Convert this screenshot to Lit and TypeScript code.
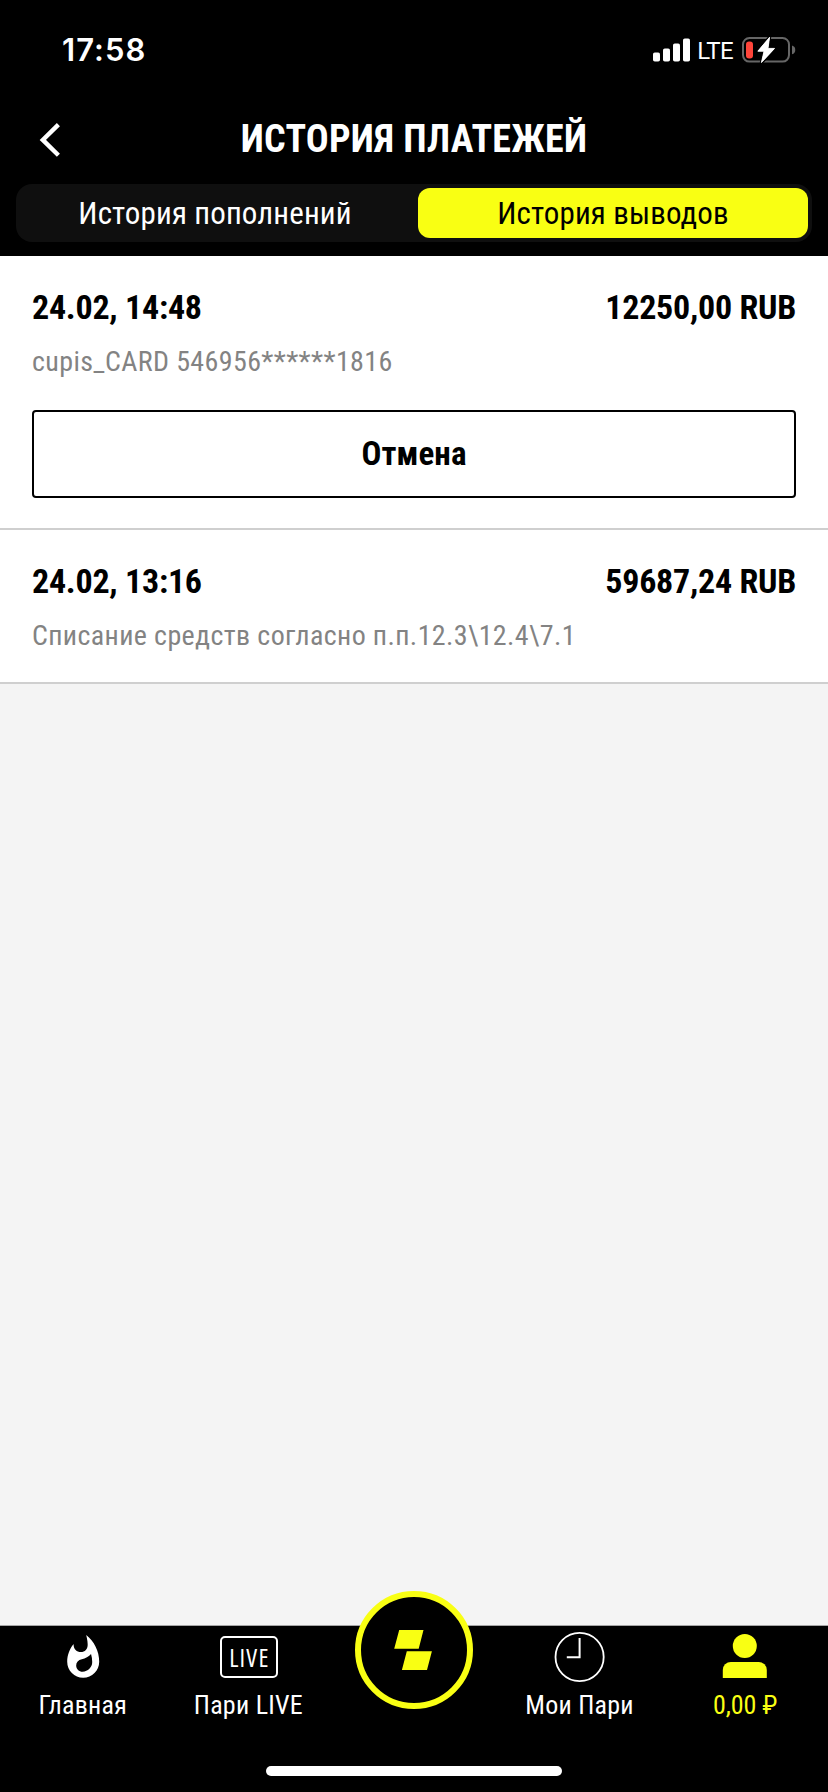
import { LitElement, html, css, svg, nothing } from "lit";
import { customElement, property, state } from "lit/decorators.js";
import { classMap } from "lit/directives/class-map.js";

interface Payment {
  date: string;
  amount: string;
  details: string;
  cancellable?: boolean;
}

const payments: Payment[] = [
  { date: "24.02, 14:48", amount: "12250,00 RUB", details: "cupis_CARD 546956******1816", cancellable: true },
  { date: "24.02, 13:16", amount: "59687,24 RUB", details: "Списание средств согласно п.п.12.3\\12.4\\7.1" },
];

@customElement("status-bar")
export class StatusBar extends LitElement {
  static styles = css`
    :host {
      display: flex;
      justify-content: space-between;
      align-items: flex-start;
      height: 68px;
      padding: 30px 32px 0 62px;
      color: #fff;
    }
    .time {
      font: 600 31px/40px Inter, sans-serif;
      letter-spacing: 1.05px;
    }
    .indicators {
      display: flex;
      align-items: center;
      height: 40px;
    }
    .signal {
      width: 38px;
      height: 24px;
    }
    .network {
      font: 400 24px/40px Roboto, sans-serif;
      letter-spacing: -0.6px;
      margin: 1px 9px 0 6px;
    }
    .battery {
      width: 54px;
      height: 28px;
    }
  `;
  render() {
    return html`
      <div class="time">17:58</div>
      <div class="indicators">
        <svg class="signal" viewBox="0 0 38 24" fill="#fff">
          <rect x="0" y="14.5" width="7" height="9" rx="1.8" />
          <rect x="10" y="10.5" width="7" height="13" rx="1.8" />
          <rect x="20" y="5.5" width="7" height="18" rx="1.8" />
          <rect x="30" y="0.5" width="7" height="23" rx="1.8" />
        </svg>
        <span class="network">LTE</span>
        <svg class="battery" viewBox="0 0 54 28">
          <rect x="1" y="2" width="46" height="23.6" rx="6.5" fill="none" stroke="#666" stroke-width="2" />
          <path d="M50 9.5a4.6 4.6 0 0 1 0 8.8z" fill="#666" />
          <rect x="4" y="5.5" width="7" height="17" rx="3" fill="#ff453a" />
          <path
            d="M27.6 1.2 15.8 15.2h6.2L19.4 26.6 32.6 12.4h-6.6z"
            fill="#fff" stroke="#000" stroke-width="3.2" stroke-linejoin="round" paint-order="stroke"
          />
          <path d="M27.6 1.2 15.8 15.2h6.2L19.4 26.6 32.6 12.4h-6.6z" fill="#fff" stroke="#fff" stroke-width=".8" stroke-linejoin="round" />
        </svg>
      </div>
    `;
  }
}

@customElement("payment-item")
export class PaymentItem extends LitElement {
  @property({ attribute: false }) payment!: Payment;

  static styles = css`
    :host {
      display: flow-root;
      padding: 31px 32px 29px;
      background: #fff;
      border-bottom: 2px solid #cfcfcf;
    }
    .summary {
      display: flex;
      justify-content: space-between;
      font-size: 34px;
      font-weight: 700;
      line-height: 41px;
      letter-spacing: -0.25px;
      color: #000;
    }
    .details {
      margin-top: 17px;
      font-size: 28px;
      line-height: 34px;
      letter-spacing: 0.37px;
      color: #838383;
    }
    .cancel {
      display: block;
      width: 100%;
      height: 88px;
      margin: 31px 0 1px;
      padding: 0;
      border: 2px solid #000;
      border-radius: 4px;
      background: #fff;
      color: #000;
      font: inherit;
      font-size: 33px;
      font-weight: 700;
      line-height: 84px;
      letter-spacing: 0.1px;
    }
  `;
  render() {
    const { date, amount, details, cancellable } = this.payment;
    return html`
      <div class="summary"><span>${date}</span><span>${amount}</span></div>
      <div class="details">${details}</div>
      ${cancellable ? html`<button class="cancel">Отмена</button>` : nothing}
    `;
  }
}

@customElement("tab-bar")
export class TabBar extends LitElement {
  static styles = css`
    :host {
      display: block;
      height: 167px;
      box-sizing: border-box;
      border-top: 1px solid #a6a6a6;
      background: #000;
      color: #fff;
    }
    .tabs {
      display: grid;
      grid-template-columns: repeat(5, 1fr);
      height: 140px;
    }
    .tab {
      position: relative;
      display: flex;
      flex-direction: column;
      align-items: center;
      font-size: 26px;
      line-height: 30px;
      letter-spacing: 0.25px;
    }
    .active {
      color: #f9ff13;
      letter-spacing: -0.1px;
    }
    .icon {
      display: block;
      width: 80px;
      height: 64px;
    }
    .live-slot {
      box-sizing: border-box;
      height: 64px;
      padding: 10px 0 0 1px;
    }
    .live {
      box-sizing: border-box;
      width: 58px;
      height: 42px;
      border: 2px solid #fff;
      border-radius: 5px;
      text-align: center;
      font-family: "Open Sans", "Roboto Condensed", sans-serif;
      font-stretch: 75%;
      font-size: 25px;
      font-weight: 400;
      line-height: 38px;
      letter-spacing: 1.2px;
      text-indent: 1px;
    }
    .logo {
      position: absolute;
      top: -35px;
      left: 50%;
      width: 118px;
      height: 118px;
      margin-left: -59px;
    }
    .home {
      width: 296px;
      height: 10px;
      margin: 0 auto;
      border-radius: 5px;
      background: #fff;
    }
  `;
  private icon(content: unknown) {
    return html`<svg class="icon" viewBox="0 0 80 64">${content}</svg>`;
  }
  render() {
    return html`
      <div class="tabs">
        <div class="tab">
          ${this.icon(svg`<path transform="translate(16.2 7.7) scale(2)" fill="#fff" d="M13.5.67s.74 2.65.74 4.8c0 2.06-1.35 3.73-3.41 3.73-2.07 0-3.63-1.67-3.63-3.73l.03-.36C5.21 7.51 4 10.62 4 14c0 4.42 3.58 8 8 8s8-3.58 8-8C20 8.61 17.41 3.8 13.5.67zM11.71 19c-1.78 0-3.22-1.4-3.22-3.14 0-1.62 1.05-2.76 2.81-3.12 1.77-.36 3.6-1.21 4.62-2.58.39 1.29.59 2.65.59 4.04 0 2.65-2.15 4.8-4.8 4.8z"/>`)}
          <span>Главная</span>
        </div>
        <div class="tab">
          <div class="live-slot"><div class="live">LIVE</div></div>
          <span>Пари LIVE</span>
        </div>
        <div class="tab">
          <svg class="logo" viewBox="0 0 118 118">
            <circle cx="59" cy="59" r="56" fill="#000" stroke="#f9ff13" stroke-width="6" />
            <path d="M44.2 39h24.3l-4.8 18.8H39.2zM51.8 60.2h25.1L72 79H46.9z" fill="#f9ff13" />
          </svg>
        </div>
        <div class="tab">
          ${this.icon(svg`<g fill="none" stroke="#fff"><circle cx="39.6" cy="31" r="24.1" stroke-width="1.8"/><path d="M39.6 12v19.3H26.8" stroke-width="2"/></g>`)}
          <span>Мои Пари</span>
        </div>
        <div class="tab active">
          ${this.icon(svg`<g fill="#f9ff13"><circle cx="39.8" cy="20" r="12"/><path d="M17.8 52v-8a8 8 0 0 1 8-8h28a8 8 0 0 1 8 8v8z"/></g>`)}
          <span>0,00 ₽</span>
        </div>
      </div>
      <div class="home"></div>
    `;
  }
}

@customElement("app-root")
export class AppRoot extends LitElement {
  @state() private active = 1;

  static styles = css`
    :host {
      display: flex;
      flex-direction: column;
      height: 1792px;
      background: #f4f4f4;
      font-family: "Roboto Condensed", Roboto, sans-serif;
    }
    .header {
      height: 256px;
      background: #000;
      color: #fff;
    }
    .title-row {
      display: grid;
      grid-template-columns: 100px 1fr 100px;
      height: 82px;
    }
    .back {
      width: 32px;
      height: 40px;
      margin: 22px 0 0 34px;
    }
    .title {
      margin: 0;
      text-align: center;
      font-size: 38px;
      font-weight: 700;
      line-height: 82px;
      letter-spacing: 0.25px;
    }
    .segments {
      display: grid;
      grid-template-columns: 1fr 1fr;
      gap: 8px;
      height: 50px;
      margin: 4px 16px 0;
      padding: 4px;
      border-radius: 16px;
      background: #0f0f0f;
    }
    .segment {
      border-radius: 12px;
      text-align: center;
      font-size: 31px;
      line-height: 52px;
      height: 50px;
      letter-spacing: 0.15px;
    }
    .selected {
      background: #f9ff13;
      color: #000;
    }
    .list {
      flex: 1;
    }
  `;
  render() {
    return html`
      <header class="header">
        <status-bar></status-bar>
        <div class="title-row">
          <svg class="back" viewBox="0 0 32 40">
            <path d="M24.4 4.6 8.8 19.9 24.4 35.2" fill="none" stroke="#fff" stroke-width="4.4" />
          </svg>
          <h1 class="title">ИСТОРИЯ ПЛАТЕЖЕЙ</h1>
        </div>
        <div class="segments">
          ${["История пополнений", "История выводов"].map(
            (label, i) => html`<div class=${classMap({ segment: true, selected: this.active === i })} @click=${() => (this.active = i)}>${label}</div>`,
          )}
        </div>
      </header>
      <main class="list">${payments.map((p) => html`<payment-item .payment=${p}></payment-item>`)}</main>
      <tab-bar></tab-bar>
    `;
  }
}
